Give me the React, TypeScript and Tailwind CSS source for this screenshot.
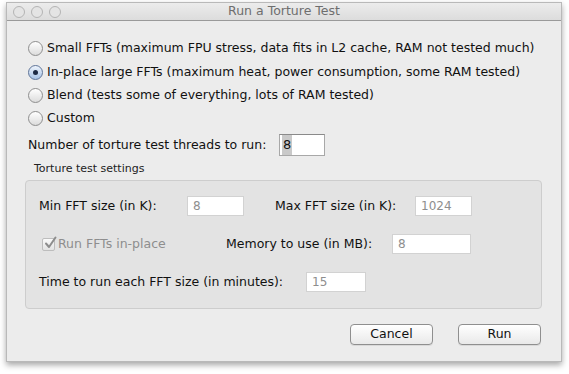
import React from "react";

const font = { fontFamily: '"DejaVu Sans", "Liberation Sans", sans-serif' };

function Radio({ label, checked, h }: { label: string; checked?: boolean; h: string }) {
  return (
    <div className={`flex items-center ${h}`}>
      {checked ? (
        <div className="flex h-[15px] w-[15px] items-center justify-center rounded-full border border-[#5f7599] bg-gradient-to-b from-[#eef4fc] to-[#a7c3e6]">
          <div className="h-[5px] w-[5px] rounded-full bg-[#1c2a44]" />
        </div>
      ) : (
        <div className="h-[15px] w-[15px] rounded-full border border-[#8e8e8e] bg-gradient-to-b from-[#ffffff] to-[#dcdcdc]" />
      )}
      <span className="ml-[4px] text-[12.5px] text-[#111]">{label}</span>
    </div>
  );
}

function Field({
  value,
  width,
}: {
  value: string;
  width: string;
}) {
  return (
    <div
      className={`flex h-[20px] items-center border border-[#d2d2d2] bg-white pl-[5px] text-[12px] text-[#8e8e8e] ${width}`}
    >
      {value}
    </div>
  );
}

function Button({ label }: { label: string }) {
  return (
    <button className="flex h-[21px] w-[83px] items-center justify-center rounded-[4px] border border-[#8f8f8f] bg-gradient-to-b from-[#ffffff] to-[#e9e9e9] text-[12.5px] text-[#111] shadow-[0_1px_0_rgba(0,0,0,0.08)]">
      {label}
    </button>
  );
}

export default function App() {
  return (
    <div className="h-[374px] w-[569px] bg-white pl-[6px] pt-[2px]" style={font}>
      <div className="flex h-[360px] w-[556px] flex-col border border-[#b9b9b9] bg-[#ececec] shadow-[0_3px_6px_rgba(0,0,0,0.35)]">
        {/* title bar */}
        <div className="relative flex h-[18px] items-center justify-center border-b border-[#9a9a9a] bg-gradient-to-b from-[#ececec] to-[#dcdcdc]">
          <div className="absolute left-[6px] top-[3px] flex gap-[6px]">
            <div className="h-[12px] w-[12px] rounded-full border border-[#b4b4b4] bg-[#e4e4e4]" />
            <div className="h-[12px] w-[12px] rounded-full border border-[#b4b4b4] bg-[#e4e4e4]" />
            <div className="h-[12px] w-[12px] rounded-full border border-[#b4b4b4] bg-[#e4e4e4]" />
          </div>
          <span className="text-[12.5px] text-[#6e6e6e]">Run a Torture Test</span>
        </div>

        <div className="flex flex-col pl-[21px] pt-[15px]">
          <Radio h="h-[24px]" label="Small FFTs (maximum FPU stress, data fits in L2 cache, RAM not tested much)" />
          <Radio h="h-[24px]" checked label="In-place large FFTs (maximum heat, power consumption, some RAM tested)" />
          <Radio h="h-[23px]" label="Blend (tests some of everything, lots of RAM tested)" />
          <Radio h="h-[22px]" label="Custom" />

          <div className="mt-[5px] flex h-[22px] items-center">
            <span className="w-[251px] text-[12.5px] text-[#111]">Number of torture test threads to run:</span>
            <div className="flex h-[22px] w-[46px] items-center border border-[#a8a8a8] border-t-[#8a8a8a] bg-white pl-[2px] text-[13px] text-[#111]">
              <span className="bg-[#c9c9c9] px-[1px]">8</span>
            </div>
          </div>
        </div>

        <div className="ml-[18px] mt-[6px] w-[517px]">
          <div className="pl-[9px] text-[11px] leading-[14px] text-[#222]">Torture test settings</div>
          <div className="mt-[4px] flex h-[129px] flex-col rounded-[4px] border border-[#cdcdcd] bg-[#e3e3e3] pt-[15px]">
            <div className="flex h-[20px] items-center pl-[13px] text-[12.5px] text-[#111]">
              <span className="w-[148px]">Min FFT size (in K):</span>
              <Field value="8" width="w-[57px]" />
              <span className="ml-[31px] w-[140px]">Max FFT size (in K):</span>
              <Field value="1024" width="w-[57px]" />
            </div>
            <div className="mt-[18px] flex h-[20px] items-center pl-[16px] text-[12.5px]">
              <div className="flex w-[184px] items-center text-[#8e8e8e]">
                <div className="relative h-[13px] w-[13px] rounded-[2px] border border-[#bdbdbd] bg-gradient-to-b from-[#fafafa] to-[#e2e2e2]">
                  <svg className="absolute -top-[3px] left-[1px]" width="13" height="14" viewBox="0 0 13 14">
                    <path d="M2 7.5 L5 11 L11.5 1.5" fill="none" stroke="#8d8d8d" strokeWidth="2" strokeLinecap="round" strokeLinejoin="round" />
                  </svg>
                </div>
                <span className="ml-[3px]">Run FFTs in-place</span>
              </div>
              <span className="w-[166px] text-[#111]">Memory to use (in MB):</span>
              <Field value="8" width="w-[79px]" />
            </div>
            <div className="mt-[18px] flex h-[20px] items-center pl-[13px] text-[12.5px] text-[#111]">
              <span className="w-[267px]">Time to run each FFT size (in minutes):</span>
              <Field value="15" width="w-[60px]" />
            </div>
          </div>
        </div>

        <div className="mt-[15px] flex justify-end gap-[25px] pr-[20px]">
          <Button label="Cancel" />
          <Button label="Run" />
        </div>
      </div>
    </div>
  );
}
